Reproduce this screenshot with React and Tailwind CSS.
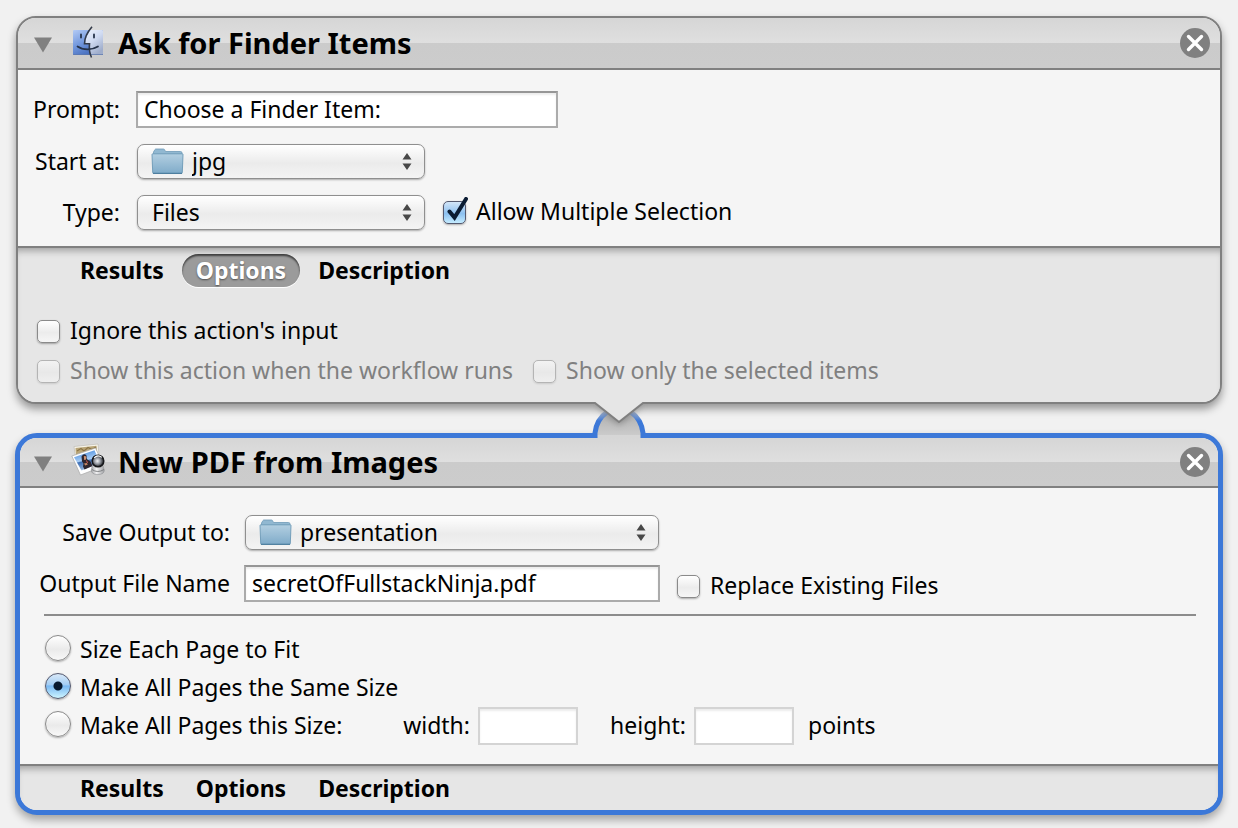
import React from "react";

function FinderIcon() {
  return (
    <svg width="32" height="34" viewBox="0 0 32 34" aria-hidden="true">
      <defs>
        <linearGradient id="finder-left" x1="0" y1="0" x2="0.6" y2="1">
          <stop offset="0" stopColor="#b4cbf5" />
          <stop offset="0.5" stopColor="#7398dd" />
          <stop offset="1" stopColor="#4169ba" />
        </linearGradient>
        <linearGradient id="finder-right" x1="0" y1="0" x2="0.6" y2="1">
          <stop offset="0" stopColor="#eef3fd" />
          <stop offset="0.5" stopColor="#d0dbf2" />
          <stop offset="1" stopColor="#9fadcb" />
        </linearGradient>
      </defs>
      <rect x="1" y="4" width="30" height="25" rx="1" fill="url(#finder-left)" />
      <path d="M18.500 4 H30 a1 1 0 0 1 1 1 V28 a1 1 0 0 1 -1 1 H18.500 L17 18 H13 C13.500 12 15.500 8 18.500 4Z" fill="url(#finder-right)" />
      <path d="M1 28.500H31" stroke="#5d78ad" strokeWidth="1" opacity="0.7" />
      <path d="M20 0.800 C15.500 6 12.500 11 12.500 17.800 H17.500 C17 22 17.500 27 19.500 31.500" fill="none" stroke="#333a48" strokeWidth="1.600" />
      <path d="M5.500 20.500 C11 24.300 20 24.300 26 20.500" fill="none" stroke="#26334a" strokeWidth="1.700" strokeLinecap="round" />
      <path d="M9 8.500V11.500M22 8.500V11.500" stroke="#26334a" strokeWidth="1.800" strokeLinecap="round" />
    </svg>
  );
}

function PreviewIcon() {
  return (
    <svg className="-ml-px mb-1" width="35" height="34" viewBox="0 0 35 34" aria-hidden="true">
      <defs>
        <linearGradient id="preview-sky" x1="0.2" y1="0" x2="0.5" y2="1">
          <stop offset="0" stopColor="#3f86dd" />
          <stop offset="0.500" stopColor="#a9cdf4" />
          <stop offset="0.560" stopColor="#3f6fb4" />
          <stop offset="0.850" stopColor="#7fa3d2" />
          <stop offset="1" stopColor="#d3e0f0" />
        </linearGradient>
        <radialGradient id="preview-lens" cx="0.450" cy="0.500" r="0.550">
          <stop offset="0" stopColor="#f4f5f7" />
          <stop offset="0.450" stopColor="#9a9ea6" />
          <stop offset="1" stopColor="#1a1b1f" />
        </radialGradient>
        <linearGradient id="preview-base" x1="0" y1="0" x2="1" y2="0">
          <stop offset="0" stopColor="#a5a6a9" />
          <stop offset="0.400" stopColor="#f2f2f3" />
          <stop offset="1" stopColor="#a0a1a4" />
        </linearGradient>
      </defs>
      <path d="M3 3.500 L27 1 L29 22 L6 24Z" fill="#f7f4ea" stroke="#b9b6ae" strokeWidth="0.600" />
      <path d="M4.500 5 L25.500 2.800 L26 9 L5 12Z" fill="#b9a577" />
      <path d="M6 8 L10 5.500 L13 8 L17 4.500 L21 6.500 L25 4" fill="none" stroke="#8c7445" strokeWidth="1.100" />
      <path d="M0.800 13 L24.500 5 L33 23 L9.500 32Z" fill="#ffffff" stroke="#a8a8a8" strokeWidth="0.700" />
      <path d="M3 14.200 L23.500 7.300 L29 20 L10.500 27.500Z" fill="url(#preview-sky)" />
      <path d="M10.500 13.500 q2.500 -4 5 -1 l0.300 3.500 3.700 2.500 2 4.500 -8 3.500 -1.500 -3 0.500 -3 -1.500 -2z" fill="#2e2630" />
      <path d="M12.800 13.300 q2 -1 2.400 1 l-0.400 2.400 -1.600 0.300z" fill="#cf9271" />
      <path d="M13 20.500l2.800 -0.500 1 1.500 -2.600 1z" fill="#c98a68" />
      <path d="M15.500 17.500l1 2.500" stroke="#d8574c" strokeWidth="1" />
      <path d="M21.500 22 h10 l1.800 5 q0 4.500 -6.500 4.500 t-6.500 -4.500z" fill="url(#preview-base)" stroke="#8d8f92" strokeWidth="0.600" />
      <path d="M21 26.500 q5.500 4 12 0" fill="none" stroke="#77797c" strokeWidth="0.900" />
      <circle cx="27" cy="18" r="5.800" fill="url(#preview-lens)" stroke="#17181b" strokeWidth="1.500" />
      <path d="M23.200 14.800 q3.600 -3.800 7.600 -0.400" fill="none" stroke="#ffffff" strokeWidth="1.200" />
    </svg>
  );
}

function FolderIcon() {
  return (
    <svg width="33" height="27" viewBox="0 0 33 27" aria-hidden="true">
      <defs>
        <linearGradient id="folder-front" x1="0" y1="0" x2="0" y2="1">
          <stop offset="0" stopColor="#b3cfe1" />
          <stop offset="1" stopColor="#7fabc9" />
        </linearGradient>
      </defs>
      <path d="M2.500 6 V4 L4 1.500 Q4.300 1 5 1 H12.500 Q13.300 1 13.600 1.700 L14.500 3.500 H29.500 Q31 3.500 31 5 V8 H2.500Z" fill="#91b8d1" stroke="#6f9ab7" strokeWidth="0.800" />
      <path d="M1 6.500 Q1 5.800 1.800 5.800 H31.200 Q32 5.800 32 6.500 L31.300 24.500 Q31.300 25.500 30.300 25.500 H2.700 Q1.700 25.500 1.700 24.500Z" fill="url(#folder-front)" stroke="#6b98b5" strokeWidth="0.900" />
      <path d="M2 25.300H31" stroke="#4e7f9f" strokeWidth="1.200" />
    </svg>
  );
}

function PopUp({ id, value, width, folder }) {
  return (
    <div className={`relative ml-px ${width}`}>
      <select
        id={id}
        defaultValue={value}
        className={`block h-[35px] w-full appearance-none rounded-[7px] border border-[#8f8f8f] bg-linear-to-b from-white from-0% via-[#ebebeb] via-55% to-[#f4f4f4] pr-10 pb-px shadow-[0_1px_2px_rgba(0,0,0,0.3)] ${folder ? "pl-[54px]" : "pl-[14px]"}`}
      >
        <option>{value}</option>
      </select>
      {folder && (
        <span className="pointer-events-none absolute top-1 left-[14px]">
          <FolderIcon />
        </span>
      )}
      <svg className="pointer-events-none absolute top-[9px] right-[13px]" width="10" height="17" viewBox="0 0 10 17" aria-hidden="true">
        <path d="M5 0 L9.500 6.500H0.500Z M5 17 L9.500 10.500H0.500Z" fill="#484848" />
      </svg>
    </div>
  );
}

function Check({ children, checked, disabled }) {
  return (
    <label className={`flex items-center gap-[10px] ${disabled ? "text-[#808080]" : ""}`}>
      <span className="relative flex">
        <input
          type="checkbox"
          defaultChecked={checked}
          disabled={disabled}
          className="peer size-[23px] appearance-none rounded-[5px] border border-[#8a8a8a] bg-linear-to-b from-white via-[#ececec] via-55% to-[#f6f6f6] shadow-[0_1px_2px_rgba(0,0,0,0.3)] checked:border-[#54596f] checked:from-[#d3e6f8] checked:via-[#8cc0f0] checked:to-[#c5ecff] disabled:border-[#b4b4b4] disabled:from-[#f3f3f3] disabled:via-[#e8e8e8] disabled:to-[#efefef] disabled:shadow-[0_1px_2px_rgba(0,0,0,0.12)]"
        />
        <svg className="pointer-events-none absolute bottom-0 left-0 hidden peer-checked:block" width="27" height="27" viewBox="0 0 27 27" aria-hidden="true">
          <path d="M6.500 14.500 L11.500 20.500 L23 2" fill="none" stroke="#0b1c33" strokeWidth="4" strokeLinecap="round" />
        </svg>
      </span>
      <span className="pb-[3px]">{children}</span>
    </label>
  );
}

function Radio({ children, checked }) {
  return (
    <label className="flex h-[38px] items-center gap-[9px] pb-[3px] pl-px">
      <input
        type="radio"
        name="page-size"
        defaultChecked={checked}
        className="mb-[2px] size-[26px] appearance-none rounded-full border border-[#8a8a8a] bg-[linear-gradient(#fff,#eaeaea_55%,#f8f8f8)] shadow-[0_1px_2px_rgba(0,0,0,0.3)] checked:border-[#54596f] checked:bg-[radial-gradient(circle,#07182e_4px,transparent_5px),linear-gradient(#d9e9f8,#a3cdf4_45%,#79b8f2_50%,#cdf5ff)]"
      />
      {children}
    </label>
  );
}

function TextBox({ className, ...rest }) {
  return (
    <input
      type="text"
      className={`border-2 bg-white px-[6px] pb-px shadow-[inset_0_2px_2px_rgba(0,0,0,0.08)] outline-none ${className}`}
      {...rest}
    />
  );
}

function FieldLabel({ htmlFor, children }) {
  return (
    <label htmlFor={htmlFor} className="justify-self-end pb-px whitespace-nowrap">
      {children}
    </label>
  );
}

function Header({ icon, title, className }) {
  return (
    <header className={`flex items-center border-b-2 border-[#808080] bg-[linear-gradient(#d6d6d6,#dfdfdf_50%,#cbcbcb_50%,#cccccc)] ${className}`}>
      <button type="button" aria-label="Collapse action" className="flex pt-1">
        <svg width="18" height="16" viewBox="0 0 18 16" aria-hidden="true">
          <path d="M0 0.500H18L9 15.500Z" fill="#808080" />
        </svg>
      </button>
      <span className="ml-5 flex w-[46px]">{icon}</span>
      <h2 className="flex-1 text-[29px] leading-[48px] font-bold">{title}</h2>
      <button type="button" aria-label="Remove action" className="flex">
        <svg width="30" height="30" viewBox="0 0 30 30" aria-hidden="true">
          <circle cx="15" cy="15" r="15" fill="#808080" />
          <path d="M8.500 8.500 L21.500 21.500 M21.500 8.500 L8.500 21.500" stroke="#fff" strokeWidth="3.400" strokeLinecap="round" />
        </svg>
      </button>
    </header>
  );
}

function Tabs({ active }) {
  return (
    <nav className="flex gap-1">
      {["Results", "Options", "Description"].map((name) => (
        <button
          key={name}
          type="button"
          className={`h-[33px] rounded-full px-[14px] pb-[2px] font-bold ${
            name === active
              ? "bg-[#9b9b9b] text-white shadow-[inset_0_2px_2px_rgba(0,0,0,0.6),0_1px_0_#fff] [text-shadow:0_1px_2px_rgba(0,0,0,0.5)]"
              : ""
          }`}
        >
          {name}
        </button>
      ))}
    </nav>
  );
}

export default function App() {
  return (
    <main className="min-h-screen bg-[#f1f1f1] px-[15px] pt-4 pb-[13px] font-['Noto_Sans',sans-serif] text-[23px] leading-[30px] text-black">
      <section className="mx-px overflow-hidden rounded-[20px] border-2 border-[#808080] bg-[#f5f5f5] shadow-[0_5px_9px_rgba(0,0,0,0.38)]">
        <Header icon={<FinderIcon />} title="Ask for Finder Items" className="h-[52px] pr-[10px] pl-4" />
        <div className="grid grid-cols-[102px_1fr] items-center gap-4 pt-[21px] pb-4">
          <FieldLabel htmlFor="prompt">Prompt:</FieldLabel>
          <TextBox id="prompt" defaultValue="Choose a Finder Item:" className="h-[37px] w-[422px] border-[#ababab] border-t-[#969696]" />
          <FieldLabel htmlFor="start">Start at:</FieldLabel>
          <PopUp id="start" value="jpg" width="w-[288px]" folder />
          <FieldLabel htmlFor="type">Type:</FieldLabel>
          <div className="flex items-center gap-[18px]">
            <PopUp id="type" value="Files" width="w-[288px]" />
            <Check checked>Allow Multiple Selection</Check>
          </div>
        </div>
        <div className="border-t-2 border-[#808080] bg-[#e6e6e6] pt-[6px] pb-[11px] shadow-[inset_0_7px_7px_-4px_rgba(0,0,0,0.3)]">
          <div className="pl-12">
            <Tabs active="Options" />
          </div>
          <div className="mt-6 pl-[19px]">
            <div className="flex h-10 items-center">
              <Check>Ignore this action's input</Check>
            </div>
            <div className="flex h-10 items-center gap-5">
              <Check disabled>Show this action when the workflow runs</Check>
              <Check disabled>Show only the selected items</Check>
            </div>
          </div>
        </div>
      </section>

      <div className="relative z-10 h-[29px]">
        <svg className="absolute -top-1 left-1/2 -translate-x-1/2" width="60" height="40" viewBox="0 0 60 40" aria-hidden="true">
          <defs>
            <linearGradient id="tab-edge" x1="0" y1="0" x2="0" y2="1">
              <stop offset="0" stopColor="#a6b4cc" />
              <stop offset="0.350" stopColor="#3c78d8" />
            </linearGradient>
            <linearGradient id="tab-fill" x1="0" y1="0" x2="0" y2="1">
              <stop offset="0.300" stopColor="#b8b8b8" />
              <stop offset="1" stopColor="#cfcfcf" />
            </linearGradient>
            <filter id="arrow-shadow" x="-30%" y="-30%" width="160%" height="180%">
              <feDropShadow dx="0" dy="3" stdDeviation="3" floodOpacity="0.25" />
            </filter>
          </defs>
          <path d="M6 38 V33 C6 25 11 17 18 12 H42 C49 17 54 25 54 33 V38Z" fill="url(#tab-fill)" />
          <path d="M6 35 H54 V38 H6Z" fill="#d6d6d6" />
          <path d="M6 38 V33 C7 24 11 17 18 12 M42 12 C49 17 53 24 54 33 V38" fill="none" stroke="url(#tab-edge)" strokeWidth="5" />
          <path d="M6 3 L30 22 L54 3Z" fill="#e6e6e6" filter="url(#arrow-shadow)" />
          <path d="M4 0 H56 V2 L54 3 L30 22 L6 3 L4 2Z" fill="#e6e6e6" />
          <path d="M3 3 H6 L30 22 L54 3 H57" fill="none" stroke="#808080" strokeWidth="2" />
        </svg>
      </div>

      <section className="overflow-hidden rounded-[22px] border-[5px] border-[#3c78d8] bg-[#f5f5f5] shadow-[0_5px_9px_rgba(0,0,0,0.32)]">
        <Header icon={<PreviewIcon />} title="New PDF from Images" className="h-[50px] pr-2 pl-[14px]" />
        <div className="pt-[27px] pr-[22px] pb-[19px] pl-6">
          <div className="grid grid-cols-[186px_1fr] items-center gap-x-[14px] gap-y-[15px]">
            <FieldLabel htmlFor="output">Save Output to:</FieldLabel>
            <PopUp id="output" value="presentation" width="w-[414px]" folder />
            <FieldLabel htmlFor="filename">Output File Name</FieldLabel>
            <div className="flex h-[37px] items-center gap-[17px]">
              <TextBox id="filename" defaultValue="secretOfFullstackNinja.pdf" className="h-[37px] w-[416px] border-[#ababab] border-t-[#969696]" />
              <div className="pt-[6px]">
                <Check>Replace Existing Files</Check>
              </div>
            </div>
          </div>
          <hr className="mt-3 mb-[15px] border-t-2 border-[#8c8c8c]" />
          <div>
            <Radio>Size Each Page to Fit</Radio>
            <Radio checked>Make All Pages the Same Size</Radio>
            <div className="flex items-center">
              <div className="w-[360px]">
                <Radio>Make All Pages this Size:</Radio>
              </div>
              <label className="flex w-[174px] items-center justify-end gap-2">
                <span className="pb-[3px]">width:</span>
                <TextBox className="h-[38px] w-[100px] border-[#d4d4d4]" />
              </label>
              <label className="flex w-[216px] items-center justify-end gap-2">
                <span className="pb-[3px]">height:</span>
                <TextBox className="h-[38px] w-[100px] border-[#d4d4d4]" />
              </label>
              <span className="pb-[3px] pl-[14px]">points</span>
            </div>
          </div>
        </div>
        <div className="border-t-2 border-[#808080] bg-[#e6e6e6] pt-[6px] pb-[5px] pl-[46px] shadow-[inset_0_7px_7px_-4px_rgba(0,0,0,0.3)]">
          <Tabs />
        </div>
      </section>
    </main>
  );
}
